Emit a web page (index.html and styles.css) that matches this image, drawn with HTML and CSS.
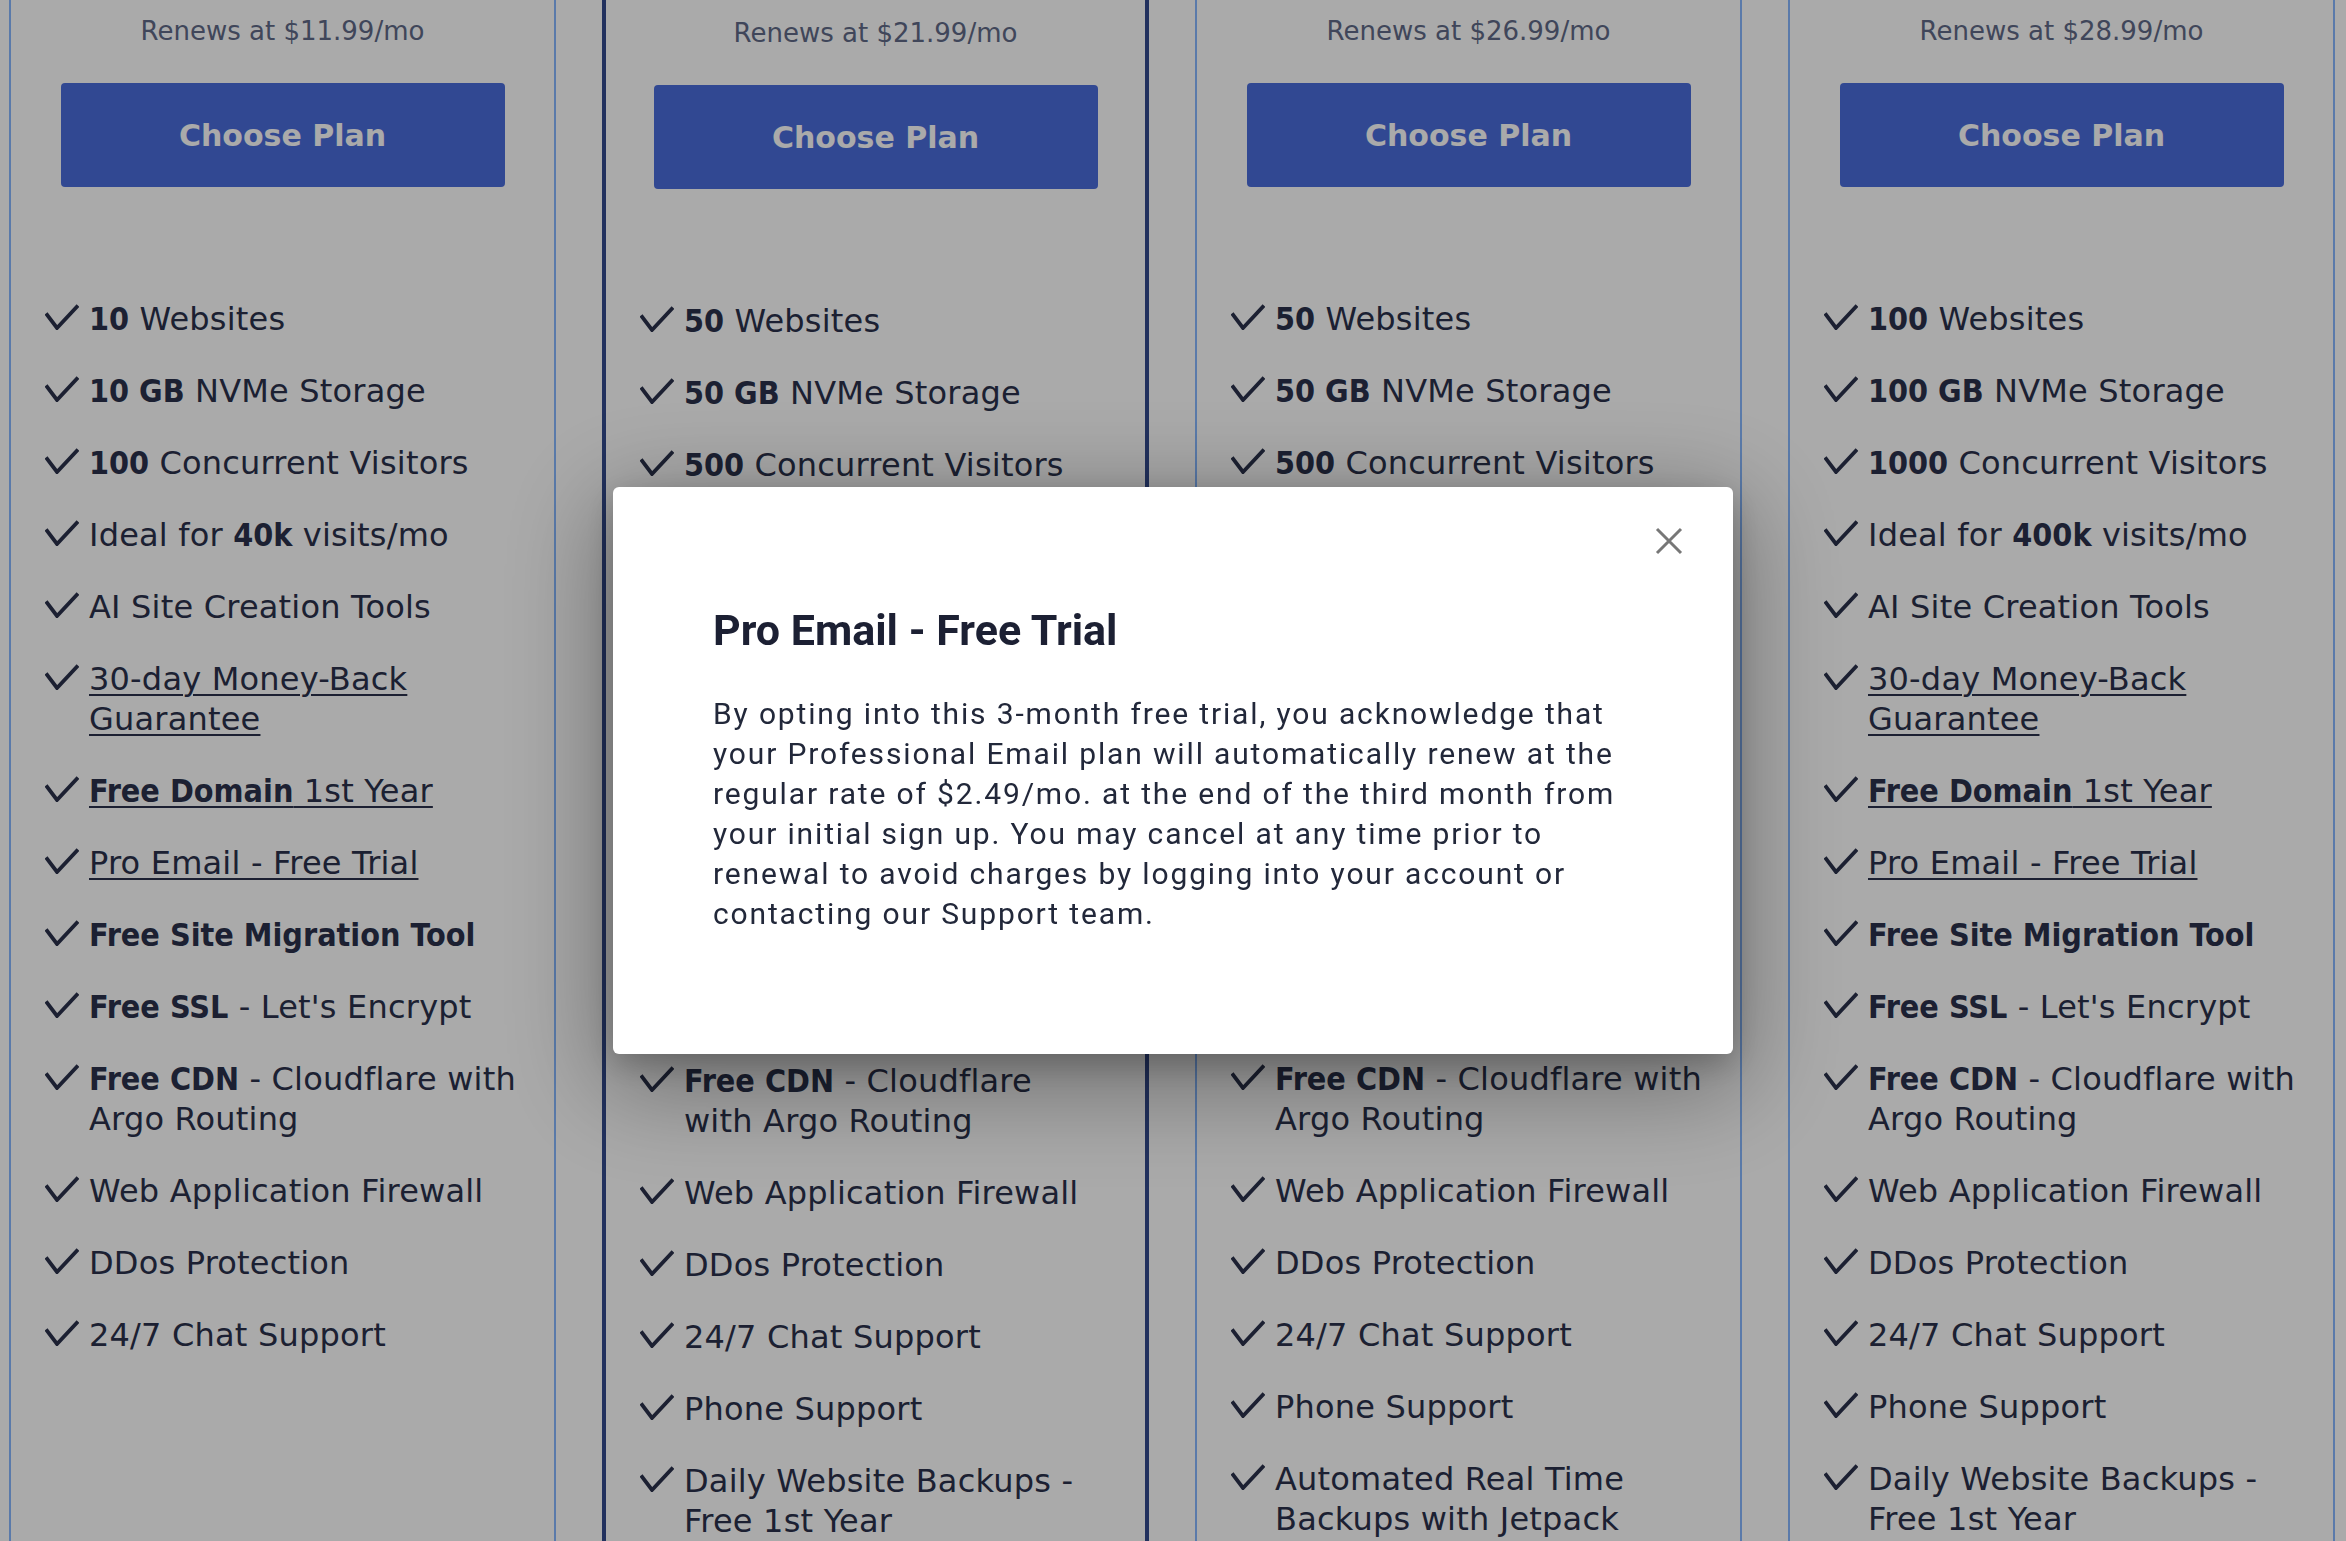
FILE: index.html
```html
<!DOCTYPE html>
<html lang="en">
<head>
  <meta charset="UTF-8">
  <title>Hosting Plans</title>
  <meta name="viewport" content="width=device-width, initial-scale=1.0">
  <link rel="stylesheet" href="styles.css">
</head>
<body>

<section class="plans">

  <div class="plan">
    <p class="plan-renew">Renews at $11.99/mo</p>
    <a href="#" class="plan-btn">Choose Plan</a>
    <ul class="features">
      <li><svg class="check" viewBox="0 0 34 26"><path d="M1 9.5 L12 24 L33 1.5"/></svg><span class="feat"><b>10</b> Websites</span></li>
      <li><svg class="check" viewBox="0 0 34 26"><path d="M1 9.5 L12 24 L33 1.5"/></svg><span class="feat"><b>10 GB</b> NVMe Storage</span></li>
      <li><svg class="check" viewBox="0 0 34 26"><path d="M1 9.5 L12 24 L33 1.5"/></svg><span class="feat"><b>100</b> Concurrent Visitors</span></li>
      <li><svg class="check" viewBox="0 0 34 26"><path d="M1 9.5 L12 24 L33 1.5"/></svg><span class="feat">Ideal for <b>40k</b> visits/mo</span></li>
      <li><svg class="check" viewBox="0 0 34 26"><path d="M1 9.5 L12 24 L33 1.5"/></svg><span class="feat">AI Site Creation Tools</span></li>
      <li><svg class="check" viewBox="0 0 34 26"><path d="M1 9.5 L12 24 L33 1.5"/></svg><span class="feat"><a href="#">30-day Money-Back Guarantee</a></span></li>
      <li><svg class="check" viewBox="0 0 34 26"><path d="M1 9.5 L12 24 L33 1.5"/></svg><span class="feat"><a href="#"><b>Free Domain</b> 1st Year</a></span></li>
      <li><svg class="check" viewBox="0 0 34 26"><path d="M1 9.5 L12 24 L33 1.5"/></svg><span class="feat"><a href="#">Pro Email - Free Trial</a></span></li>
      <li><svg class="check" viewBox="0 0 34 26"><path d="M1 9.5 L12 24 L33 1.5"/></svg><span class="feat"><b>Free Site Migration Tool</b></span></li>
      <li><svg class="check" viewBox="0 0 34 26"><path d="M1 9.5 L12 24 L33 1.5"/></svg><span class="feat"><b>Free SSL</b> - Let's Encrypt</span></li>
      <li><svg class="check" viewBox="0 0 34 26"><path d="M1 9.5 L12 24 L33 1.5"/></svg><span class="feat"><b>Free CDN</b> - Cloudflare with Argo Routing</span></li>
      <li><svg class="check" viewBox="0 0 34 26"><path d="M1 9.5 L12 24 L33 1.5"/></svg><span class="feat">Web Application Firewall</span></li>
      <li><svg class="check" viewBox="0 0 34 26"><path d="M1 9.5 L12 24 L33 1.5"/></svg><span class="feat">DDos Protection</span></li>
      <li><svg class="check" viewBox="0 0 34 26"><path d="M1 9.5 L12 24 L33 1.5"/></svg><span class="feat">24/7 Chat Support</span></li>
    </ul>
  </div>

  <div class="plan featured">
    <p class="plan-renew">Renews at $21.99/mo</p>
    <a href="#" class="plan-btn">Choose Plan</a>
    <ul class="features">
      <li><svg class="check" viewBox="0 0 34 26"><path d="M1 9.5 L12 24 L33 1.5"/></svg><span class="feat"><b>50</b> Websites</span></li>
      <li><svg class="check" viewBox="0 0 34 26"><path d="M1 9.5 L12 24 L33 1.5"/></svg><span class="feat"><b>50 GB</b> NVMe Storage</span></li>
      <li><svg class="check" viewBox="0 0 34 26"><path d="M1 9.5 L12 24 L33 1.5"/></svg><span class="feat"><b>500</b> Concurrent Visitors</span></li>
      <li><svg class="check" viewBox="0 0 34 26"><path d="M1 9.5 L12 24 L33 1.5"/></svg><span class="feat">Ideal for <b>200k</b> visits/mo</span></li>
      <li><svg class="check" viewBox="0 0 34 26"><path d="M1 9.5 L12 24 L33 1.5"/></svg><span class="feat">AI Site Creation Tools</span></li>
      <li><svg class="check" viewBox="0 0 34 26"><path d="M1 9.5 L12 24 L33 1.5"/></svg><span class="feat"><a href="#">30-day Money-Back Guarantee</a></span></li>
      <li><svg class="check" viewBox="0 0 34 26"><path d="M1 9.5 L12 24 L33 1.5"/></svg><span class="feat"><a href="#"><b>Free Domain</b> 1st Year</a></span></li>
      <li><svg class="check" viewBox="0 0 34 26"><path d="M1 9.5 L12 24 L33 1.5"/></svg><span class="feat"><a href="#">Pro Email - Free Trial</a></span></li>
      <li><svg class="check" viewBox="0 0 34 26"><path d="M1 9.5 L12 24 L33 1.5"/></svg><span class="feat"><b>Free Site Migration Tool</b></span></li>
      <li><svg class="check" viewBox="0 0 34 26"><path d="M1 9.5 L12 24 L33 1.5"/></svg><span class="feat"><b>Free SSL</b> - Let's Encrypt</span></li>
      <li><svg class="check" viewBox="0 0 34 26"><path d="M1 9.5 L12 24 L33 1.5"/></svg><span class="feat"><b>Free CDN</b> - Cloudflare with Argo Routing</span></li>
      <li><svg class="check" viewBox="0 0 34 26"><path d="M1 9.5 L12 24 L33 1.5"/></svg><span class="feat">Web Application Firewall</span></li>
      <li><svg class="check" viewBox="0 0 34 26"><path d="M1 9.5 L12 24 L33 1.5"/></svg><span class="feat">DDos Protection</span></li>
      <li><svg class="check" viewBox="0 0 34 26"><path d="M1 9.5 L12 24 L33 1.5"/></svg><span class="feat">24/7 Chat Support</span></li>
      <li><svg class="check" viewBox="0 0 34 26"><path d="M1 9.5 L12 24 L33 1.5"/></svg><span class="feat">Phone Support</span></li>
      <li><svg class="check" viewBox="0 0 34 26"><path d="M1 9.5 L12 24 L33 1.5"/></svg><span class="feat">Daily Website Backups - Free 1st Year</span></li>
    </ul>
  </div>

  <div class="plan">
    <p class="plan-renew">Renews at $26.99/mo</p>
    <a href="#" class="plan-btn">Choose Plan</a>
    <ul class="features">
      <li><svg class="check" viewBox="0 0 34 26"><path d="M1 9.5 L12 24 L33 1.5"/></svg><span class="feat"><b>50</b> Websites</span></li>
      <li><svg class="check" viewBox="0 0 34 26"><path d="M1 9.5 L12 24 L33 1.5"/></svg><span class="feat"><b>50 GB</b> NVMe Storage</span></li>
      <li><svg class="check" viewBox="0 0 34 26"><path d="M1 9.5 L12 24 L33 1.5"/></svg><span class="feat"><b>500</b> Concurrent Visitors</span></li>
      <li><svg class="check" viewBox="0 0 34 26"><path d="M1 9.5 L12 24 L33 1.5"/></svg><span class="feat">Ideal for <b>200k</b> visits/mo</span></li>
      <li><svg class="check" viewBox="0 0 34 26"><path d="M1 9.5 L12 24 L33 1.5"/></svg><span class="feat">AI Site Creation Tools</span></li>
      <li><svg class="check" viewBox="0 0 34 26"><path d="M1 9.5 L12 24 L33 1.5"/></svg><span class="feat"><a href="#">30-day Money-Back Guarantee</a></span></li>
      <li><svg class="check" viewBox="0 0 34 26"><path d="M1 9.5 L12 24 L33 1.5"/></svg><span class="feat"><a href="#"><b>Free Domain</b> 1st Year</a></span></li>
      <li><svg class="check" viewBox="0 0 34 26"><path d="M1 9.5 L12 24 L33 1.5"/></svg><span class="feat"><a href="#">Pro Email - Free Trial</a></span></li>
      <li><svg class="check" viewBox="0 0 34 26"><path d="M1 9.5 L12 24 L33 1.5"/></svg><span class="feat"><b>Free Site Migration Tool</b></span></li>
      <li><svg class="check" viewBox="0 0 34 26"><path d="M1 9.5 L12 24 L33 1.5"/></svg><span class="feat"><b>Free SSL</b> - Let's Encrypt</span></li>
      <li><svg class="check" viewBox="0 0 34 26"><path d="M1 9.5 L12 24 L33 1.5"/></svg><span class="feat"><b>Free CDN</b> - Cloudflare with Argo Routing</span></li>
      <li><svg class="check" viewBox="0 0 34 26"><path d="M1 9.5 L12 24 L33 1.5"/></svg><span class="feat">Web Application Firewall</span></li>
      <li><svg class="check" viewBox="0 0 34 26"><path d="M1 9.5 L12 24 L33 1.5"/></svg><span class="feat">DDos Protection</span></li>
      <li><svg class="check" viewBox="0 0 34 26"><path d="M1 9.5 L12 24 L33 1.5"/></svg><span class="feat">24/7 Chat Support</span></li>
      <li><svg class="check" viewBox="0 0 34 26"><path d="M1 9.5 L12 24 L33 1.5"/></svg><span class="feat">Phone Support</span></li>
      <li><svg class="check" viewBox="0 0 34 26"><path d="M1 9.5 L12 24 L33 1.5"/></svg><span class="feat">Automated Real Time Backups with Jetpack</span></li>
    </ul>
  </div>

  <div class="plan">
    <p class="plan-renew">Renews at $28.99/mo</p>
    <a href="#" class="plan-btn">Choose Plan</a>
    <ul class="features">
      <li><svg class="check" viewBox="0 0 34 26"><path d="M1 9.5 L12 24 L33 1.5"/></svg><span class="feat"><b>100</b> Websites</span></li>
      <li><svg class="check" viewBox="0 0 34 26"><path d="M1 9.5 L12 24 L33 1.5"/></svg><span class="feat"><b>100 GB</b> NVMe Storage</span></li>
      <li><svg class="check" viewBox="0 0 34 26"><path d="M1 9.5 L12 24 L33 1.5"/></svg><span class="feat"><b>1000</b> Concurrent Visitors</span></li>
      <li><svg class="check" viewBox="0 0 34 26"><path d="M1 9.5 L12 24 L33 1.5"/></svg><span class="feat">Ideal for <b>400k</b> visits/mo</span></li>
      <li><svg class="check" viewBox="0 0 34 26"><path d="M1 9.5 L12 24 L33 1.5"/></svg><span class="feat">AI Site Creation Tools</span></li>
      <li><svg class="check" viewBox="0 0 34 26"><path d="M1 9.5 L12 24 L33 1.5"/></svg><span class="feat"><a href="#">30-day Money-Back Guarantee</a></span></li>
      <li><svg class="check" viewBox="0 0 34 26"><path d="M1 9.5 L12 24 L33 1.5"/></svg><span class="feat"><a href="#"><b>Free Domain</b> 1st Year</a></span></li>
      <li><svg class="check" viewBox="0 0 34 26"><path d="M1 9.5 L12 24 L33 1.5"/></svg><span class="feat"><a href="#">Pro Email - Free Trial</a></span></li>
      <li><svg class="check" viewBox="0 0 34 26"><path d="M1 9.5 L12 24 L33 1.5"/></svg><span class="feat"><b>Free Site Migration Tool</b></span></li>
      <li><svg class="check" viewBox="0 0 34 26"><path d="M1 9.5 L12 24 L33 1.5"/></svg><span class="feat"><b>Free SSL</b> - Let's Encrypt</span></li>
      <li><svg class="check" viewBox="0 0 34 26"><path d="M1 9.5 L12 24 L33 1.5"/></svg><span class="feat"><b>Free CDN</b> - Cloudflare with Argo Routing</span></li>
      <li><svg class="check" viewBox="0 0 34 26"><path d="M1 9.5 L12 24 L33 1.5"/></svg><span class="feat">Web Application Firewall</span></li>
      <li><svg class="check" viewBox="0 0 34 26"><path d="M1 9.5 L12 24 L33 1.5"/></svg><span class="feat">DDos Protection</span></li>
      <li><svg class="check" viewBox="0 0 34 26"><path d="M1 9.5 L12 24 L33 1.5"/></svg><span class="feat">24/7 Chat Support</span></li>
      <li><svg class="check" viewBox="0 0 34 26"><path d="M1 9.5 L12 24 L33 1.5"/></svg><span class="feat">Phone Support</span></li>
      <li><svg class="check" viewBox="0 0 34 26"><path d="M1 9.5 L12 24 L33 1.5"/></svg><span class="feat">Daily Website Backups - Free 1st Year</span></li>
    </ul>
  </div>

</section>

<div class="overlay">
  <div class="modal" role="dialog" aria-labelledby="modal-title">
    <button class="modal-close" aria-label="Close">
      <svg viewBox="0 0 28 28"><path d="M2 2 L26 26 M26 2 L2 26"/></svg>
    </button>
    <h2 id="modal-title" class="modal-title">Pro Email - Free Trial</h2>
    <p class="modal-text">By opting into this 3-month free trial, you acknowledge that your Professional Email plan will automatically renew at the regular rate of $2.49/mo. at the end of the third month from your initial sign up. You may cancel at any time prior to renewal to avoid charges by logging into your account or contacting our Support team.</p>
  </div>
</div>

</body>
</html>
```

FILE: styles.css
```css
:root {
  --text: #2a314b;
  --text-soft: #606a87;
  --border: #87b8ff;
  --featured: #334a8d;
  --btn: #4a6ddc;
}
html, body {
  margin: 0;
  padding: 0;
}
body {
  font-family: "DejaVu Sans", Verdana, sans-serif;
  background: #fff;
  color: var(--text);
  overflow: hidden;
}

/* plans grid (page is scrolled a bit, top of the cards is off-screen) */
.plans {
  display: grid;
  grid-template-columns: repeat(4, 547px);
  column-gap: 46px;
  padding-left: 9px;
  margin-top: -30px;
}
.plan {
  border: 2px solid var(--border);
  padding-bottom: 80px;
}
.plan.featured {
  border: 4px solid var(--featured);
}
.plan-renew {
  margin: 43px 0 0 0;
  text-align: center;
  font-size: 26px;
  line-height: 32px;
  color: var(--text-soft);
}
.plan-btn {
  display: flex;
  align-items: center;
  justify-content: center;
  width: 444px;
  height: 104px;
  margin: 36px auto 0 auto;
  background: var(--btn);
  color: #fff;
  border-radius: 4px;
  font-size: 30px;
  font-weight: 700;
  text-decoration: none;
}

.features {
  list-style: none;
  margin: 112px 0 0 0;
  padding: 0 30px 0 34px;
}
.featured .features {
  padding-right: 40px;
}
.features li {
  display: flex;
  gap: 10px;
  font-size: 32px;
  line-height: 40px;
  letter-spacing: 0.2px;
  margin-bottom: 32px;
}
.check {
  flex: none;
  width: 34px;
  height: 26px;
  margin-top: 5px;
  fill: none;
  stroke: var(--text);
  stroke-width: 3.8;
}
.feat b {
  font-family: "DejaVu Sans Condensed", "DejaVu Sans", sans-serif;
  font-weight: 700;
  letter-spacing: 0;
}
.feat a {
  color: inherit;
  text-decoration: underline;
  text-decoration-thickness: 2px;
  text-underline-offset: 4px;
}

/* modal */
.overlay {
  position: fixed;
  inset: 0;
  background: rgba(0, 0, 0, 0.333);
  display: flex;
  align-items: center;
  justify-content: center;
}
.modal {
  position: relative;
  width: 1120px;
  box-sizing: border-box;
  padding: 118px 100px 120px 100px;
  background: #fff;
  border-radius: 6px;
  box-shadow: 0 24px 100px 12px rgba(0, 0, 0, 0.35), 0 10px 30px rgba(0, 0, 0, 0.2);
  font-family: Roboto, "Liberation Sans", sans-serif;
  color: #22283a;
}
.modal-close {
  position: absolute;
  top: 40px;
  right: 50px;
  width: 28px;
  height: 28px;
  padding: 0;
  border: 0;
  background: none;
  cursor: pointer;
}
.modal-close svg {
  display: block;
  width: 28px;
  height: 28px;
  stroke: #777;
  stroke-width: 3;
}
.modal-title {
  margin: 0;
  font-size: 43px;
  line-height: 50px;
  font-weight: 700;
  color: #1c2033;
}
.modal-text {
  margin: 39px 0 0 0;
  font-size: 30px;
  line-height: 40px;
  letter-spacing: 1.85px;
}
```
